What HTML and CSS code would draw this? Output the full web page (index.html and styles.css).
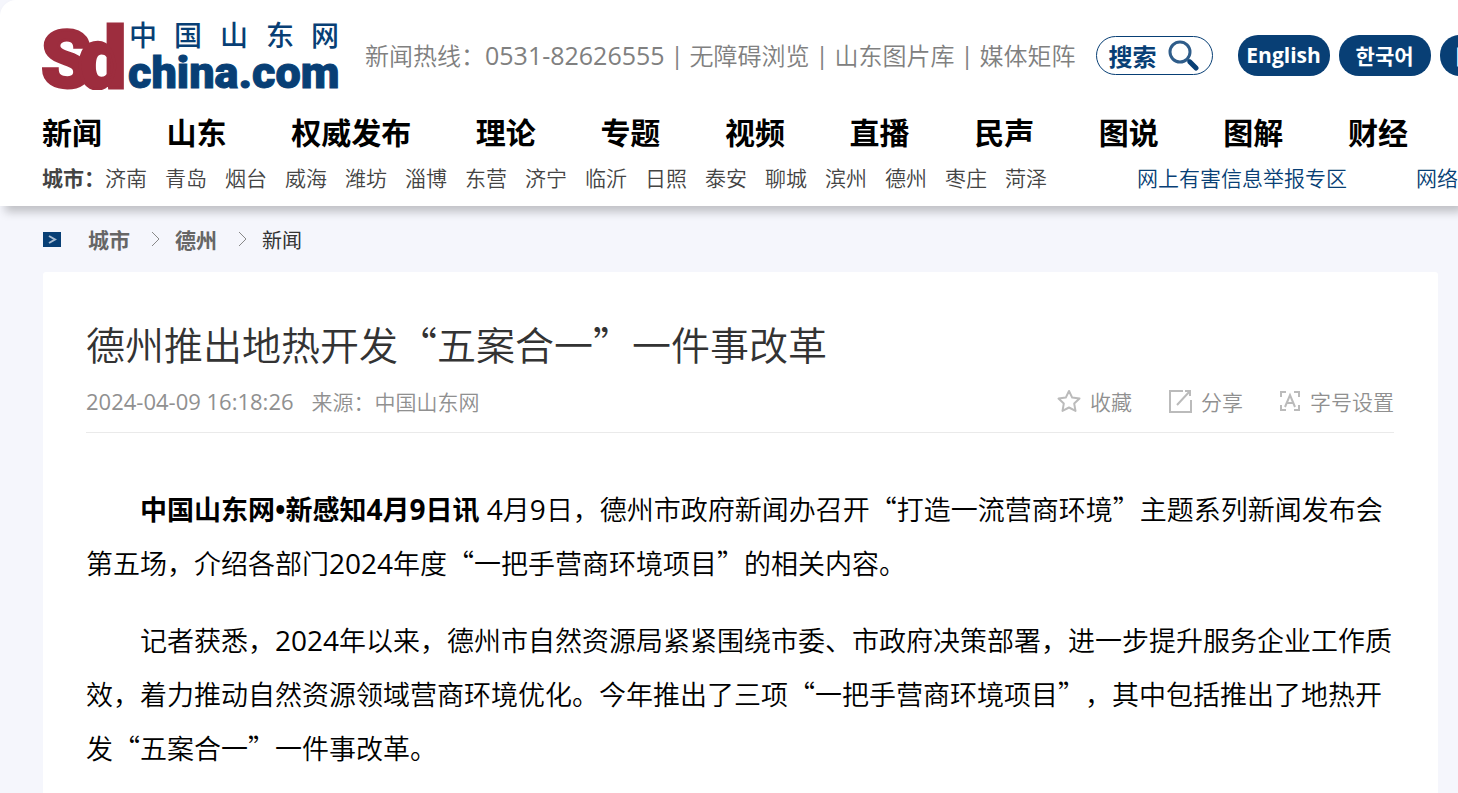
FILE: index.html
```
<!DOCTYPE html>
<html lang="zh-CN">
<head>
<meta charset="UTF-8">
<meta name="viewport" content="width=device-width, initial-scale=1.0">
<title>德州推出地热开发“五案合一”一件事改革</title>
<link rel="stylesheet" href="styles.css">
</head>
<body>

<header class="header">
  <div class="topbar">
    <a class="logo" href="#" aria-label="中国山东网">
      <svg width="298" height="72" viewBox="0 0 298 72">
        <text class="logo-sd logo-s" x="-1" y="68">S</text>
        <text class="logo-sd" x="36" y="69">d</text>
        <text class="logo-cn" x="87 132 178 224 269" y="27">中国山东网</text>
        <text class="logo-en" x="86" y="69">china.com</text>
      </svg>
    </a>
    <div class="hotline">
      <span>新闻热线：<span class="num">0531-82626555</span></span><i>|</i>
      <a href="#">无障碍浏览</a><i>|</i>
      <a href="#">山东图片库</a><i>|</i>
      <a href="#">媒体矩阵</a>
    </div>
    <button class="search-btn" type="button">搜索
      <svg width="32" height="32" viewBox="0 0 32 32" fill="none" stroke="#2f5d8a">
        <circle cx="13" cy="13" r="10" stroke-width="3"/>
        <path d="M20 20l3 3" stroke-width="3"/>
        <path d="M23 23l6 6" stroke="#083f75" stroke-width="5" stroke-linecap="round"/>
      </svg>
    </button>
    <div class="langs">
      <a class="num" href="#">English</a>
      <a class="kr" lang="ko" href="#">한국어</a>
      <a lang="ja" href="#">日本語</a>
    </div>
  </div>

  <nav class="nav">
    <a href="#">新闻</a>
    <a href="#">山东</a>
    <a href="#">权威发布</a>
    <a href="#">理论</a>
    <a href="#">专题</a>
    <a href="#">视频</a>
    <a href="#">直播</a>
    <a href="#">民声</a>
    <a href="#">图说</a>
    <a href="#">图解</a>
    <a href="#">财经</a>
  </nav>

  <div class="cities">
    <strong>城市：</strong>
    <div class="city-list">
      <a href="#">济南</a>
      <a href="#">青岛</a>
      <a href="#">烟台</a>
      <a href="#">威海</a>
      <a href="#">潍坊</a>
      <a href="#">淄博</a>
      <a href="#">东营</a>
      <a href="#">济宁</a>
      <a href="#">临沂</a>
      <a href="#">日照</a>
      <a href="#">泰安</a>
      <a href="#">聊城</a>
      <a href="#">滨州</a>
      <a href="#">德州</a>
      <a href="#">枣庄</a>
      <a href="#">菏泽</a>
    </div>
    <div class="report">
      <a href="#">网上有害信息举报专区</a>
      <a href="#">网络</a>
    </div>
  </div>
</header>

<div class="crumbs">
  <svg class="crumb-icon" width="18" height="15" viewBox="0 0 18 15">
    <path fill="#083f75" d="M0 0h18v15H0z"/>
    <path fill="none" stroke="#a9bdd2" stroke-width="2" d="M6 4l6 3.500-6 3.500"/>
  </svg>
  <a href="#">城市</a>
  <svg width="9" height="16" viewBox="0 0 9 16" fill="none" stroke="#888"><path d="M1 1l7 7-7 7"/></svg>
  <a href="#">德州</a>
  <svg width="9" height="16" viewBox="0 0 9 16" fill="none" stroke="#888"><path d="M1 1l7 7-7 7"/></svg>
  <span>新闻</span>
</div>

<main class="article">
  <h1>德州推出地热开发“五案合一”一件事改革</h1>
  <div class="meta">
    <span class="num date">2024-04-09 16:18:26</span>
    <span>来源：中国山东网</span>
    <div class="tools">
      <button type="button">
        <svg width="24" height="24" viewBox="0 0 24 24" fill="none" stroke="#bbb" stroke-width="2" stroke-linejoin="round"><path d="M12 2l3.200 6.600 7.300 1-5.300 5 1.300 7.300L12 18.500l-6.500 3.400 1.300-7.300-5.300-5 7.300-1z"/></svg>
        收藏
      </button>
      <button type="button">
        <svg width="24" height="24" viewBox="0 0 24 24" fill="none" stroke="#bbb" stroke-width="2"><path d="M15 2H2v21h21V11M9 16L22 2M17 2h5v5"/></svg>
        分享
      </button>
      <button type="button">
        <svg width="22" height="22" viewBox="0 0 22 22" fill="none" stroke="#bbb" stroke-width="2"><path d="M7 2H2v5M15 2h5v5M2 15v5h5M20 15v5h-5M6 17l5-12 5 12M8 13h6"/></svg>
        字号设置
      </button>
    </div>
  </div>

  <div class="content">
    <p><strong>中国山东网<span class="num">•</span>新感知<span class="num">4</span>月<span class="num">9</span>日讯</strong><span class="num"> 4</span>月<span class="num">9</span>日，德州市政府新闻办召开“打造一流营商环境”主题系列新闻发布会第五场，介绍各部门<span class="num">2024</span>年度“一把手营商环境项目”的相关内容。</p>
    <p>记者获悉，<span class="num">2024</span>年以来，德州市自然资源局紧紧围绕市委、市政府决策部署，进一步提升服务企业工作质效，着力推动自然资源领域营商环境优化。今年推出了三项“一把手营商环境项目”，其中包括推出了地热开发“五案合一”一件事改革。</p>
  </div>
</main>

</body>
</html>
```
FILE: styles.css
```
*{box-sizing:border-box;margin:0;padding:0;}
html{scrollbar-width:none;background:#f5f6fc;}
body{font-family:"Noto Sans CJK SC",sans-serif;background:#f5f6fc;color:#333;text-spacing-trim:space-all;}
a{color:inherit;text-decoration:none;}
button{font:inherit;color:inherit;background:none;border:none;cursor:pointer;}
svg{display:block;flex:none;}
.num{font-family:"Open Sans","Noto Sans CJK SC",sans-serif;font-weight:400;line-height:1;}
strong .num{font-weight:bold;}

/* header */
.header{background:#fff;border-top-left-radius:16px;box-shadow:5px 6px 10px rgba(0,0,0,0.22);padding:20px 0 14px 42px;white-space:nowrap;}
.topbar{display:flex;align-items:center;height:70px;overflow:hidden;}
.logo{margin-right:25px;}
.logo-sd{font-family:Roboto,sans-serif;font-weight:900;font-size:86px;fill:#9d2d3e;stroke:#9d2d3e;stroke-width:3;}
.logo-s{font-size:80px;}
.logo-cn{font-family:"Noto Sans CJK SC",sans-serif;font-weight:500;font-size:28px;fill:#083f75;}
.logo-en{font-family:Roboto,sans-serif;font-weight:900;font-size:45px;fill:#083f75;stroke:#083f75;stroke-width:1;}
.hotline{display:flex;flex:none;align-items:center;font-size:24px;line-height:36px;color:#808080;font-weight:350;}
.hotline .num{font-size:25px;}
.hotline i{font-family:"Open Sans",sans-serif;font-style:normal;font-weight:400;width:25px;text-align:center;}
.search-btn{display:flex;flex:none;align-items:center;justify-content:space-between;width:117px;height:39px;margin-left:20px;padding:0 13px 0 12px;border:1px solid #083f75;border-radius:20px;color:#083f75;font-size:24px;font-weight:bold;}
.langs{display:flex;flex:none;gap:9px;margin-left:25px;}
.langs a{width:92px;height:41px;line-height:40px;border-radius:20px;background:#083f75;color:#fff;font-size:21px;font-weight:bold;text-align:center;}
.langs .kr{font-family:"Noto Sans CJK KR",sans-serif;}

.nav{display:flex;justify-content:space-between;margin-top:20px;padding-right:50px;font-size:30px;line-height:42px;font-weight:bold;color:#000;}
.cities{display:flex;margin-top:10px;overflow:hidden;font-size:21px;line-height:30px;color:#444;}
.city-list{display:flex;flex:none;gap:18px;font-weight:350;}
.report{display:flex;flex:none;gap:69px;margin-left:90px;color:#083f75;font-weight:350;}

/* breadcrumb */
.crumbs{display:flex;align-items:center;height:66px;padding-left:43px;font-size:20px;color:#333;}
.crumbs a{margin:0 21px 0 15px;font-size:21px;font-weight:bold;color:#666;}
.crumbs a:first-of-type{margin-left:27px;}
.crumbs span{margin-left:15px;}

/* article */
.article{margin:0 20px 0 43px;padding:42px 44px 45px 43px;border-radius:3px;background:#fff;}
.article h1{font-size:39px;line-height:58px;font-weight:350;color:#333;}
.meta{display:flex;align-items:center;margin-top:14px;padding-bottom:16px;border-bottom:1px solid #eaeaea;font-size:21px;line-height:30px;font-weight:350;color:#909090;}
.meta .date{margin-right:18px;font-size:22px;}
.tools{display:flex;gap:36px;margin-left:auto;}
.tools button{display:flex;align-items:center;gap:9px;}
.content{padding-top:49px;font-size:27px;line-height:54px;font-weight:350;color:#000;}
.content p{margin-bottom:23px;text-indent:2em;}
.content .num{font-size:28px;}
```
